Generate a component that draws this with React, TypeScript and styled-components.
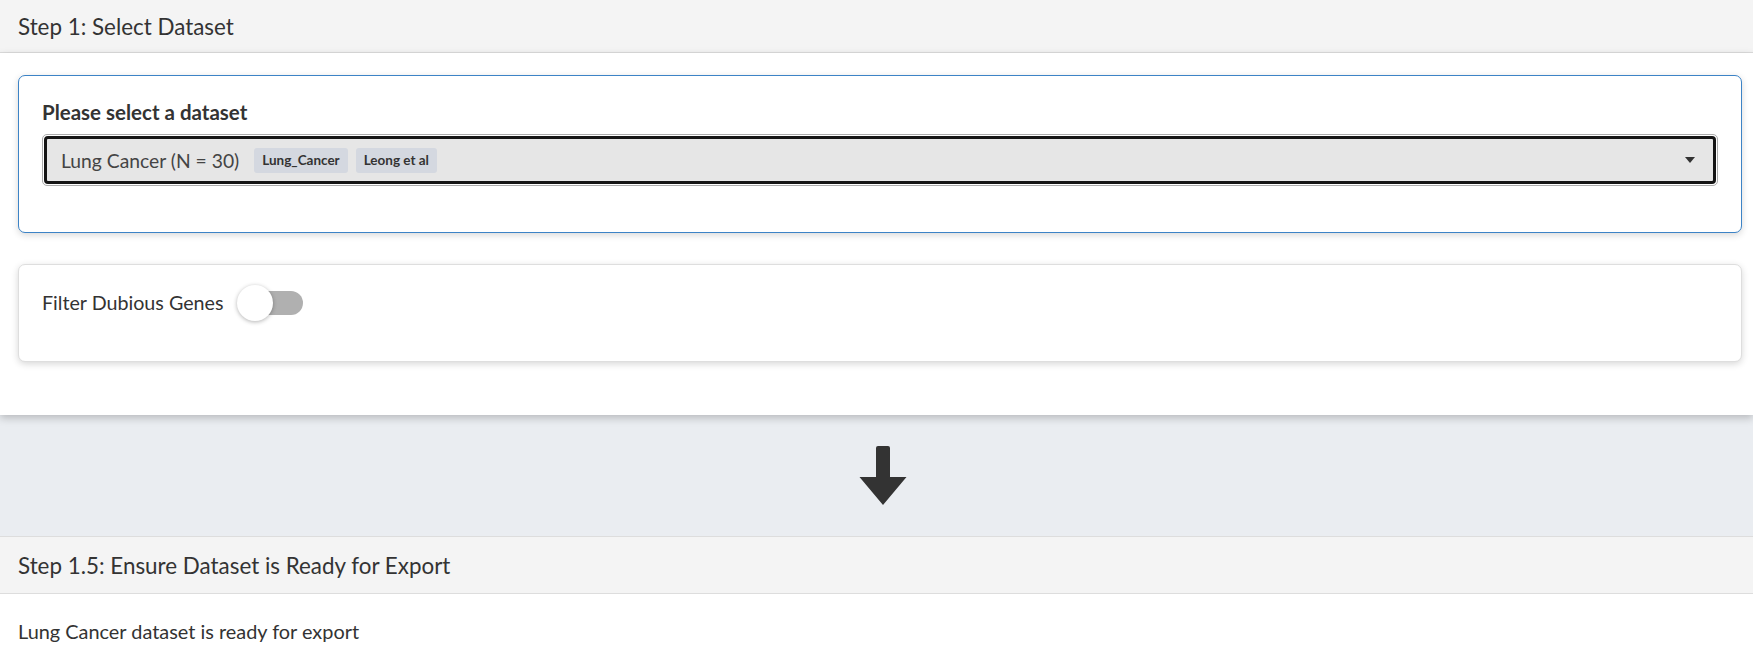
import React, { FC } from "react";
import styled, { createGlobalStyle } from "styled-components";

const GlobalStyle = createGlobalStyle`
  html, body {
    margin: 0;
    padding: 0;
    background: #ffffff;
    color: #333333;
    font-family: Lato, "Liberation Sans", sans-serif;
  }
`;

const Page = styled.div`
  display: flex;
  flex-direction: column;
  min-height: 669px;
`;

const StepHeader = styled.div<{ $tall?: boolean }>`
  display: flex;
  align-items: center;
  height: ${({ $tall }) => ($tall ? "56px" : "52px")};
  padding-left: 18px;
  background: #f4f4f4;
  border-bottom: 1px solid #dddddd;
  border-top: ${({ $tall }) => ($tall ? "1px solid #dddddd" : "none")};
  font-size: 22.4px;
  color: #333333;
`;

const StepBody = styled.section`
  position: relative;
  z-index: 1;
  display: flex;
  flex-direction: column;
  gap: 31px;
  padding: 22px 11px 53px 18px;
  background: #ffffff;
  box-shadow: 0 3px 8px rgba(0, 0, 0, 0.22);
`;

const Card = styled.div<{ $active?: boolean }>`
  border: 1px solid ${({ $active }) => ($active ? "#3c83c6" : "#dedede")};
  border-radius: 7px;
  background: #ffffff;
  box-shadow: 0 2px 7px rgba(0, 0, 0, 0.16);
`;

const SelectCard = styled(Card)`
  padding: 24px 23px 46px 23px;
`;

const ToggleCard = styled(Card)`
  display: flex;
  align-items: flex-start;
  gap: 14px;
  height: 98px;
  box-sizing: border-box;
  padding: 25px 23px 0 23px;
`;

const Label = styled.div`
  font-size: 20.5px;
  line-height: 25px;
  font-weight: 700;
  margin-bottom: 9px;
  color: #333333;
`;

const SelectOuter = styled.div`
  border: 1px solid #acacac;
  border-radius: 5px;
  padding: 1px;
  background: #ffffff;
`;

const SelectInner = styled.div`
  display: flex;
  align-items: center;
  height: 42px;
  padding: 0 18px 0 14px;
  border: 3px solid #151515;
  border-radius: 4px;
  background: #e6e6e6;
`;

const SelectText = styled.span`
  font-size: 19.3px;
  font-weight: 400;
  color: #444444;
  margin-right: 15px;
`;

const Badge = styled.span`
  display: inline-flex;
  align-items: center;
  height: 25px;
  padding: 0 8px;
  margin-right: 8px;
  border-radius: 3px;
  background: #d4d8e0;
  font-size: 13.5px;
  font-weight: 700;
  color: #333333;
`;

const Caret = styled.span`
  margin-left: auto;
  width: 0;
  height: 0;
  border-left: 5px solid transparent;
  border-right: 5px solid transparent;
  border-top: 6px solid #333333;
`;

const ToggleLabel = styled.span`
  font-size: 19.7px;
  line-height: 26px;
  color: #333333;
`;

const Switch = styled.span`
  position: relative;
  display: inline-block;
  width: 66px;
  height: 36px;
  margin-top: -5px;
`;

const Track = styled.span`
  position: absolute;
  left: 14px;
  right: 0;
  top: 6px;
  height: 24px;
  border-radius: 12px;
  background: #b0b0b0;
`;

const Knob = styled.span`
  position: absolute;
  left: 0;
  top: 0;
  width: 36px;
  height: 36px;
  border-radius: 50%;
  background: #ffffff;
  box-shadow: 0 1px 4px rgba(0, 0, 0, 0.3);
`;

const ArrowRow = styled.div`
  display: flex;
  justify-content: center;
  align-items: center;
  height: 121px;
  padding-left: 12px;
  background: #eaedf1;
`;

const Message = styled.p`
  margin: 0;
  padding: 25px 18px;
  font-size: 19.9px;
  color: #333333;
`;

const ArrowDown: FC = () => (
  <svg width="48" height="60" viewBox="0 0 48 60">
    <path
      d="M19 0h10a2 2 0 0 1 2 2v29h16.5L24 59 0.5 31H17V2a2 2 0 0 1 2-2z"
      fill="#333333"
      strokeLinejoin="round"
    />
  </svg>
);

const App: FC = () => (
  <Page>
    <GlobalStyle />
    <StepHeader>Step 1: Select Dataset</StepHeader>
    <StepBody>
      <SelectCard $active>
        <Label>Please select a dataset</Label>
        <SelectOuter>
          <SelectInner>
            <SelectText>Lung Cancer (N = 30)</SelectText>
            <Badge>Lung_Cancer</Badge>
            <Badge>Leong et al</Badge>
            <Caret />
          </SelectInner>
        </SelectOuter>
      </SelectCard>
      <ToggleCard>
        <ToggleLabel>Filter Dubious Genes</ToggleLabel>
        <Switch>
          <Track />
          <Knob />
        </Switch>
      </ToggleCard>
    </StepBody>
    <ArrowRow>
      <ArrowDown />
    </ArrowRow>
    <StepHeader $tall>Step 1.5: Ensure Dataset is Ready for Export</StepHeader>
    <Message>Lung Cancer dataset is ready for export</Message>
  </Page>
);

export default App;
